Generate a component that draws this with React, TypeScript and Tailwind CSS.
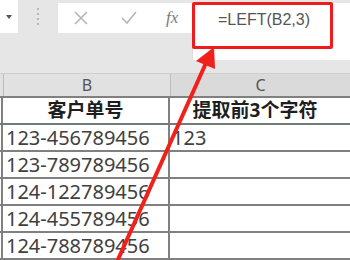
import React from "react";

const rows: [string, string][] = [
  ["123-456789456", "123"],
  ["123-789789456", ""],
  ["124-122789456", ""],
  ["124-455789456", ""],
  ["124-788789456", ""],
  ["", ""],
];

export default function App() {
  return (
    <div className="relative w-[350px] h-[260px] overflow-hidden bg-[#e6e6e6]" style={{ fontFamily: '"Noto Sans", "Noto Sans CJK SC", sans-serif' }}>
      {/* toolbar */}
      <div className="flex items-start h-[73px]">
        <div className="w-[18px] h-[33px] bg-white flex items-center justify-center">
          <div className="w-0 h-0 border-l-[3px] border-r-[3px] border-t-[4px] border-l-transparent border-r-transparent border-t-[#555]" />
        </div>
        <div className="w-[40px] h-[33px] flex flex-col items-center justify-center gap-[3px]">
          <div className="w-[2px] h-[2px] rounded-full bg-[#a8a8a8]" />
          <div className="w-[2px] h-[2px] rounded-full bg-[#a8a8a8]" />
          <div className="w-[2px] h-[2px] rounded-full bg-[#a8a8a8]" />
          <div className="w-[2px] h-[2px] rounded-full bg-[#a8a8a8]" />
        </div>
        <div className="mt-[3px] w-[134px] h-[30px] bg-white flex items-center">
          <svg width="16" height="16" viewBox="0 0 16 16" className="ml-[15px]">
            <path d="M2 2 L14 14 M14 2 L2 14" stroke="#b5b5b5" strokeWidth="1.6" fill="none" />
          </svg>
          <svg width="18" height="16" viewBox="0 0 18 16" className="ml-[31px]">
            <path d="M2 8 L7 13 L16 2" stroke="#b5b5b5" strokeWidth="1.6" fill="none" />
          </svg>
          <span className="ml-[28px] text-[17px] italic text-[#7a7a7a]" style={{ fontFamily: '"Liberation Serif", serif' }}>fx</span>
        </div>
        <div className="mt-[3px] flex-1 h-[57px] bg-white border-l border-[#dcdcdc]">
          <div className="pl-[25px] pt-[5px] text-[16px] text-[#555] leading-[24px]" style={{ fontFamily: '"Liberation Sans", sans-serif' }}>=LEFT(B2,3)</div>
        </div>
      </div>

      {/* column headers */}
      <div className="flex h-[23px] border-t border-[#cfcfcf]">
        <div className="w-[3px] bg-[#e1e1e1]" />
        <div className="w-[177px] border-l border-[#bdbdbd] bg-[#e1e1e1] flex items-center justify-center text-[16px] text-[#555]">B</div>
        <div className="w-[180px] shrink-0 border-l border-[#bdbdbd] bg-[#dadada] flex items-center justify-center text-[16px] text-[#555]">C</div>
      </div>

      {/* grid */}
      <div className="bg-white border-t-2 border-[#808080]">
        <div className="flex h-[27px] border-b-2 border-[#6f7f74]">
          <div className="w-[3px] border-r-2 border-[#808080]" />
          <div className="w-[177px] border-r-2 border-[#808080] flex items-center justify-center text-[19px] font-bold text-[#1e1e1e]">客户单号</div>
          <div className="w-[180px] shrink-0 flex items-center justify-center text-[19px] font-bold text-[#1e1e1e] pr-[10px]">提取前3个字符</div>
        </div>
        {rows.map(([b, c], i) => (
          <div key={i} className="flex h-[27px] border-b-2 border-[#808080]">
            <div className="w-[3px] border-r-2 border-[#808080]" />
            <div className="w-[177px] border-r-2 border-[#808080] flex items-center pl-[3px] text-[20px] text-[#404040] whitespace-nowrap">{b}</div>
            <div className="w-[180px] shrink-0 flex items-center pl-[2px] text-[20px] text-[#404040]">{c}</div>
          </div>
        ))}
      </div>

      {/* red highlight box */}
      <div className="absolute left-[192px] top-[2px] w-[141px] h-[47px] border-[3px] border-[#ee1c1c] rounded-[2px]" />

      {/* red arrow */}
      <svg className="absolute left-0 top-0" width="350" height="260" viewBox="0 0 350 260">
        <line x1="116" y1="264" x2="206" y2="63" stroke="#f0201a" strokeWidth="4" />
        <polygon points="214,47 215,69 196,61" fill="#f0201a" />
      </svg>
    </div>
  );
}
